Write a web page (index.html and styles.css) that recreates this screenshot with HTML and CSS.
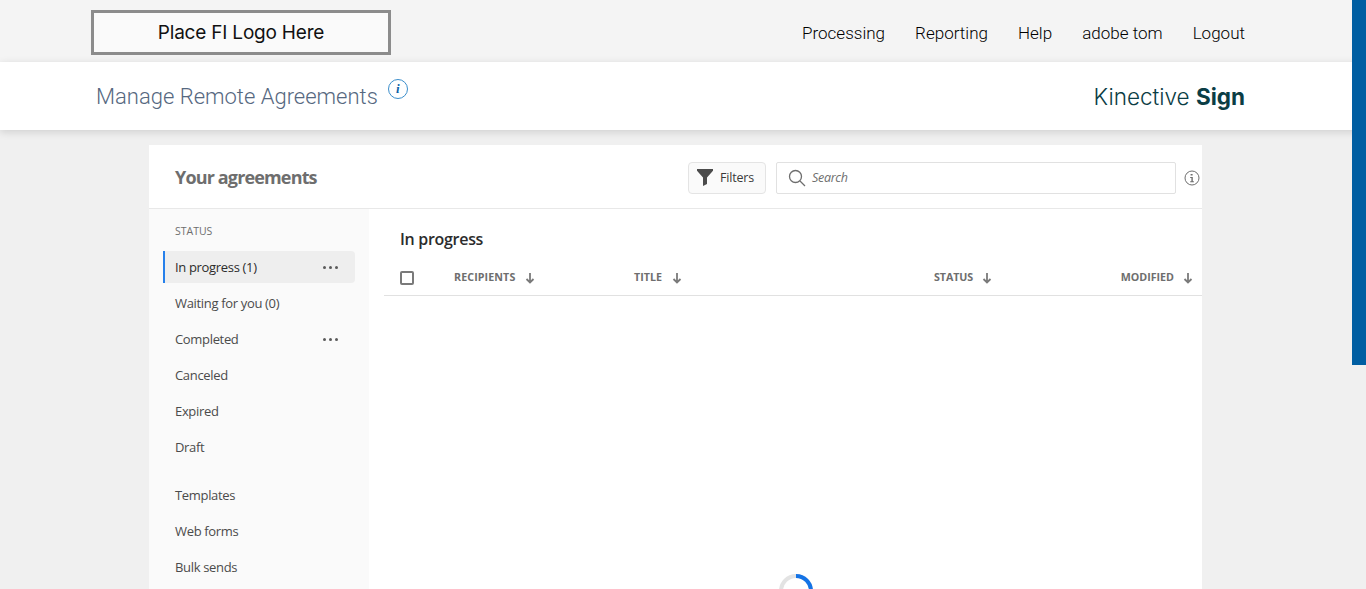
FILE: index.html
```html
<!DOCTYPE html>
<html lang="en">
<head>
<meta charset="utf-8">
<title>Manage Remote Agreements</title>
<link rel="stylesheet" href="styles.css">
</head>
<body>
<div class="scroll-thumb"></div>
<header class="topbar">
  <div class="logo-box">Place FI Logo Here</div>
  <nav class="topnav">
    <a>Processing</a><a>Reporting</a><a>Help</a><a>adobe tom</a><a>Logout</a>
  </nav>
</header>
<div class="titlebar">
  <div class="title-wrap">
    <h1 class="page-title">Manage Remote Agreements</h1>
    <span class="info-blue">i</span>
  </div>
  <div class="brand">Kinective <b>Sign</b></div>
</div>
<main class="card">
  <div class="toolbar">
    <h2 class="card-title">Your agreements</h2>
    <button class="filter-btn">
      <svg width="16" height="17" viewBox="0 0 16 17"><path d="M0 0h16v1.800L10 8.600V15l-4 2V8.600L0 1.800z" fill="#4b4b4b"/></svg>
      Filters
    </button>
    <div class="search">
      <svg width="18" height="18" viewBox="0 0 18 18" fill="none" stroke="#6e6e6e" stroke-width="1.300"><circle cx="7.500" cy="7.500" r="6"/><path d="M12 12l5 5"/></svg>
      <span>Search</span>
    </div>
    <svg class="info-grey" width="16" height="16" viewBox="0 0 16 16"><circle cx="8" cy="8" r="7" fill="none" stroke="#6e6e6e"/><path d="M6.600 4h2v1.600h-2zM6.200 7h2.600v4.200h1.100v1H6.200v-1h1.200V8H6.200z" fill="#6e6e6e"/></svg>
  </div>
  <div class="content">
    <aside class="sidebar">
      <div class="side-label">STATUS</div>
      <ul class="side-list">
        <li class="active">In progress (1)<span class="dots"><i></i><i></i><i></i></span></li>
        <li>Waiting for you (0)</li>
        <li>Completed<span class="dots"><i></i><i></i><i></i></span></li>
        <li>Canceled</li>
        <li>Expired</li>
        <li>Draft</li>
      </ul>
      <ul class="side-list second">
        <li>Templates</li>
        <li>Web forms</li>
        <li>Bulk sends</li>
      </ul>
    </aside>
    <section class="list">
      <h3 class="list-title">In progress</h3>
      <div class="thead">
        <span class="check"></span>
        <span class="th th-rec">RECIPIENTS<svg class="arrow" width="10" height="12" viewBox="0 0 10 12"><path d="M5 1v9M1.500 7L5 10.500 8.500 7" fill="none" stroke="#7a7a7a" stroke-width="1.800"/></svg></span>
        <span class="th th-title">TITLE<svg class="arrow" width="10" height="12" viewBox="0 0 10 12"><path d="M5 1v9M1.500 7L5 10.500 8.500 7" fill="none" stroke="#7a7a7a" stroke-width="1.800"/></svg></span>
        <span class="th th-status">STATUS<svg class="arrow" width="10" height="12" viewBox="0 0 10 12"><path d="M5 1v9M1.500 7L5 10.500 8.500 7" fill="none" stroke="#7a7a7a" stroke-width="1.800"/></svg></span>
        <span class="th th-mod">MODIFIED<svg class="arrow" width="10" height="12" viewBox="0 0 10 12"><path d="M5 1v9M1.500 7L5 10.500 8.500 7" fill="none" stroke="#7a7a7a" stroke-width="1.800"/></svg></span>
      </div>
      <div class="loader">
        <svg width="34" height="34" viewBox="0 0 34 34" fill="none" stroke-width="4"><circle cx="17" cy="17" r="15" stroke="#e3e3e3"/><path d="M17 2A15 15 0 0 1 32 17" stroke="#1473e6"/></svg>
      </div>
    </section>
  </div>
</main>
</body>
</html>
```
FILE: styles.css
```css
* { box-sizing: border-box; }
html, body { margin: 0; height: 589px; overflow: hidden; }
body { background: #f0f0f0; font-family: "Open Sans", sans-serif; position: relative; }
.scroll-thumb { position: absolute; right: 0; top: 0; width: 14px; height: 365px; background: #005ea2; z-index: 5; }
.topbar { height: 62px; background: #f4f4f4; display: flex; align-items: flex-start; justify-content: space-between; padding: 10px 121px 0 91px; }
.logo-box { width: 300px; height: 45px; border: 3px solid #8c8c8c; background: #fafafa; display: flex; align-items: center; justify-content: center; font: 400 19px "Inter", sans-serif; color: #111; letter-spacing: -0.2px; }
.topnav { display: flex; gap: 30px; padding-top: 13px; font: 300 17px/20px "Roboto", sans-serif; color: #000; letter-spacing: 0.015px; }
.titlebar { height: 68px; background: #fff; display: flex; justify-content: space-between; padding: 0 121px 0 96px; box-shadow: 0 2px 8px rgba(0,0,0,.14); position: relative; }
.title-wrap { display: flex; align-items: flex-start; gap: 10px; }
.page-title { margin: 21px 0 0; font: 300 22px/28px "Roboto", sans-serif; color: #56687f; }
.info-blue { margin-top: 17px; width: 20px; height: 20px; border: 1px solid #3b8ecb; border-radius: 50%; display: flex; align-items: center; justify-content: center; font: italic 700 13px "Liberation Serif", serif; color: #0d62a8; }
.brand { margin-top: 20px; font: 300 22.500px/30px "Inter", sans-serif; color: #0b3d45; }
.brand b { font-weight: 700; }
.card { margin: 15px 0 0 149px; width: 1053px; height: 444px; background: #fff; overflow: hidden; }
.toolbar { height: 64px; border-bottom: 1px solid #e8e8e8; display: flex; align-items: center; padding: 2px 2px 0 26px; }
.card-title { margin: -2px auto 0 0; font: 700 18px "Open Sans", sans-serif; color: #6e6e6e; letter-spacing: -0.850px; }
.filter-btn { width: 78px; height: 32px; border: 1px solid #e4e4e4; border-radius: 4px; background: #fafafa; display: flex; align-items: center; gap: 7px; padding: 0 0 0 8px; font: 400 12.500px "Open Sans", sans-serif; color: #3a3a3a; letter-spacing: -0.2px; }
.search { margin-left: 10px; width: 400px; height: 32px; border: 1px solid #e1e1e1; border-radius: 2px; display: flex; align-items: center; gap: 6px; padding-left: 11px; font: italic 400 12.500px "Open Sans", sans-serif; color: #6e6e6e; letter-spacing: -0.300px; }
.info-grey { margin-left: 8px; }
.content { display: flex; height: 380px; }
.sidebar { width: 220px; background: #fafafa; padding: 15px 14px 0 14px; flex: none; }
.side-label { margin-left: 12px; font: 400 10.500px/14px "Open Sans", sans-serif; color: #6e6e6e; height: 27px; }
.side-list { list-style: none; margin: 0; padding: 0; }
.side-list li { height: 32px; margin-bottom: 4px; padding: 0 16px 0 12px; display: flex; align-items: center; justify-content: space-between; font: 400 13px "Open Sans", sans-serif; color: #4b4b4b; letter-spacing: -0.330px; }
.side-list .active { background: #eee; border-left: 2px solid #2680eb; padding-left: 10px; border-radius: 0 4px 4px 0; color: #2c2c2c; }
.side-list.second { margin-top: 16px; }
.dots { display: flex; gap: 3px; margin-right: 1px; }
.dots i { width: 3px; height: 3px; border-radius: 50%; background: #5a5a5a; }
.list { flex: 1; padding-left: 15px; position: relative; min-width: 0; }
.list-title { margin: 0; padding: 19px 0 0 16px; font: 600 16px/22px "Open Sans", sans-serif; color: #2c2c2c; letter-spacing: -0.300px; }
.thead { position: relative; height: 36px; margin-top: 10px; border-bottom: 1px solid #e1e1e1; }
.check { position: absolute; left: 16px; top: 11px; width: 14px; height: 14px; border: 2px solid #7a7a7a; border-radius: 2px; }
.th { position: absolute; top: 10px; display: flex; align-items: center; gap: 9px; font: 700 10.700px/14px "Open Sans", sans-serif; color: #6e6e6e; }
.th-rec { left: 70px; gap: 10px; letter-spacing: 0.100px; }
.th-title { left: 250px; gap: 10px; }
.th-status { left: 550px; letter-spacing: -0.100px; }
.th-mod { right: 9px; }
.arrow { margin-top: 2px; }
.loader { position: absolute; left: 410px; top: 365px; }
```
